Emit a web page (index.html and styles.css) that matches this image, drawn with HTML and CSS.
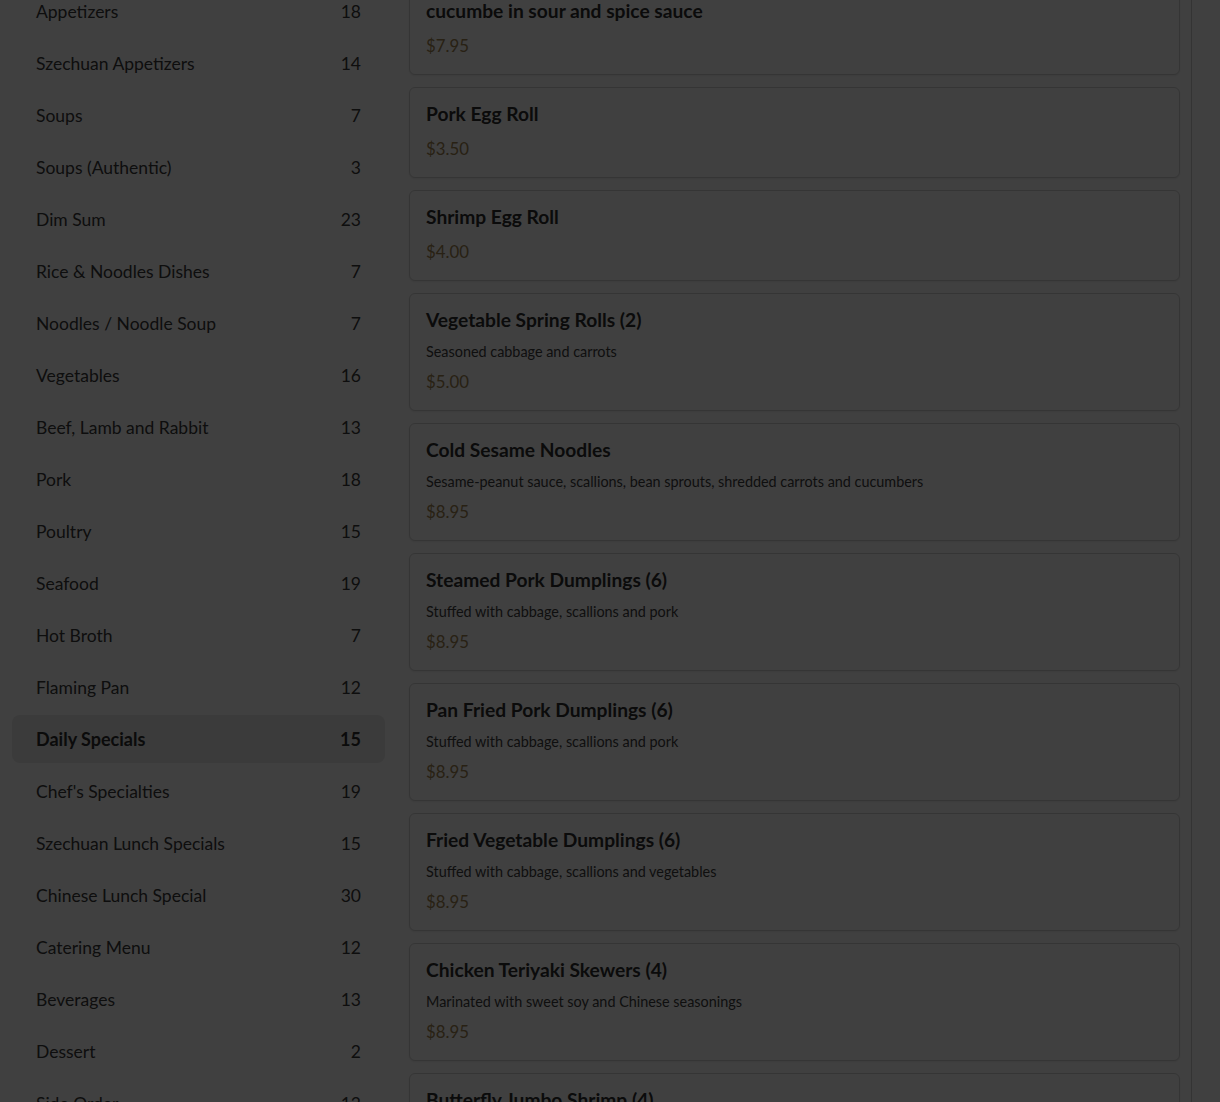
FILE: index.html
```html
<!DOCTYPE html>
<html lang="en">
<head>
<meta charset="utf-8">
<title>Menu</title>
<link rel="stylesheet" href="styles.css">
</head>
<body>
<div class="page">
  <aside class="sidebar">
    <ul class="cats">
      <li class="cat"><span>Appetizers</span><span>18</span></li>
      <li class="cat"><span>Szechuan Appetizers</span><span>14</span></li>
      <li class="cat"><span>Soups</span><span>7</span></li>
      <li class="cat"><span>Soups (Authentic)</span><span>3</span></li>
      <li class="cat"><span>Dim Sum</span><span>23</span></li>
      <li class="cat"><span>Rice &amp; Noodles Dishes</span><span>7</span></li>
      <li class="cat"><span>Noodles / Noodle Soup</span><span>7</span></li>
      <li class="cat"><span>Vegetables</span><span>16</span></li>
      <li class="cat"><span>Beef, Lamb and Rabbit</span><span>13</span></li>
      <li class="cat"><span>Pork</span><span>18</span></li>
      <li class="cat"><span>Poultry</span><span>15</span></li>
      <li class="cat"><span>Seafood</span><span>19</span></li>
      <li class="cat"><span>Hot Broth</span><span>7</span></li>
      <li class="cat"><span>Flaming Pan</span><span>12</span></li>
      <li class="cat active"><span>Daily Specials</span><span>15</span></li>
      <li class="cat"><span>Chef's Specialties</span><span>19</span></li>
      <li class="cat"><span>Szechuan Lunch Specials</span><span>15</span></li>
      <li class="cat"><span>Chinese Lunch Special</span><span>30</span></li>
      <li class="cat"><span>Catering Menu</span><span>12</span></li>
      <li class="cat"><span>Beverages</span><span>13</span></li>
      <li class="cat"><span>Dessert</span><span>2</span></li>
      <li class="cat"><span>Side Order</span><span>12</span></li>
    </ul>
  </aside>
  <main class="items">
    <div class="card">
      <h3 class="title">Sliced Cold Sichuan Salad with<br>cucumbe in sour and spice sauce</h3>
      <div class="price">$7.95</div>
    </div>
    <div class="card">
      <h3 class="title">Pork Egg Roll</h3>
      <div class="price">$3.50</div>
    </div>
    <div class="card">
      <h3 class="title">Shrimp Egg Roll</h3>
      <div class="price">$4.00</div>
    </div>
    <div class="card">
      <h3 class="title">Vegetable Spring Rolls (2)</h3>
      <p class="desc">Seasoned cabbage and carrots</p>
      <div class="price">$5.00</div>
    </div>
    <div class="card">
      <h3 class="title">Cold Sesame Noodles</h3>
      <p class="desc">Sesame-peanut sauce, scallions, bean sprouts, shredded carrots and cucumbers</p>
      <div class="price">$8.95</div>
    </div>
    <div class="card">
      <h3 class="title">Steamed Pork Dumplings (6)</h3>
      <p class="desc">Stuffed with cabbage, scallions and pork</p>
      <div class="price">$8.95</div>
    </div>
    <div class="card">
      <h3 class="title">Pan Fried Pork Dumplings (6)</h3>
      <p class="desc">Stuffed with cabbage, scallions and pork</p>
      <div class="price">$8.95</div>
    </div>
    <div class="card">
      <h3 class="title">Fried Vegetable Dumplings (6)</h3>
      <p class="desc">Stuffed with cabbage, scallions and vegetables</p>
      <div class="price">$8.95</div>
    </div>
    <div class="card">
      <h3 class="title">Chicken Teriyaki Skewers (4)</h3>
      <p class="desc">Marinated with sweet soy and Chinese seasonings</p>
      <div class="price">$8.95</div>
    </div>
    <div class="card">
      <h3 class="title">Butterfly Jumbo Shrimp (4)</h3>
      <p class="desc">Served with sweet and sour sauce</p>
      <div class="price">$8.95</div>
    </div>
  </main>
</div>
<div class="backdrop"></div>
</body>
</html>
```
FILE: styles.css
```css
* { box-sizing: border-box; }
html, body { margin: 0; padding: 0; }
body {
  background: #ffffff;
  font-family: Lato, "Noto Sans", sans-serif;
  color: #333333;
  overflow: hidden;
  height: 1102px;
}
.page {
  display: flex;
  align-items: flex-start;
  margin-top: -36px;
}
.sidebar {
  width: 397px;
  flex: none;
  padding: 23px 12px 0 12px;
}
.cats {
  list-style: none;
  margin: 0;
  padding: 0;
  display: flex;
  flex-direction: column;
  gap: 4px;
}
.cat {
  height: 48px;
  padding: 0 24px;
  display: flex;
  align-items: center;
  justify-content: space-between;
  font-size: 17.5px;
  color: #383838;
  border-radius: 8px;
}
.cat.active {
  background: #e9e9e9;
  font-weight: 700;
  font-size: 18px;
  color: #2e2e2e;
}
.items {
  width: 795px;
  flex: none;
  padding: 0 11px 0 12px;
  border-right: 1px solid #cfcfcf;
  display: flex;
  flex-direction: column;
  gap: 12px;
}
.card {
  border: 1px solid #d4d4d4;
  border-radius: 6px;
  padding: 16px;
  box-shadow: 0 1px 2px rgba(0, 0, 0, 0.08);
  background: #ffffff;
}
.title {
  margin: 0 0 12px 0;
  font-size: 19.2px;
  line-height: 20px;
  font-weight: 700;
  color: #2e2e2e;
}
.desc {
  margin: 0 0 7px 0;
  font-size: 14.4px;
  line-height: 20px;
  color: #3e3e3e;
}
.price {
  font-size: 16.8px;
  line-height: 25px;
  color: #a08350;
}
.backdrop {
  position: fixed;
  inset: 0;
  background: rgba(0, 0, 0, 0.75);
}
```
